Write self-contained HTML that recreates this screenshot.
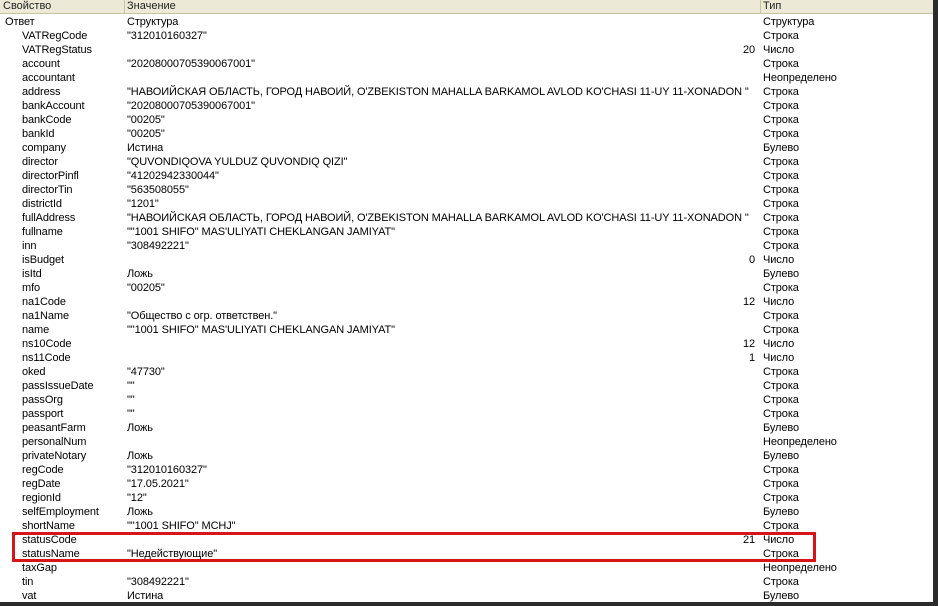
<!DOCTYPE html>
<html><head><meta charset="utf-8"><style>
body{margin:0;width:938px;height:606px;overflow:hidden;background:#fff;font-family:"Liberation Sans",Arial,sans-serif;font-size:11px;color:#000;position:relative}
.hdr{position:absolute;left:0;top:0;width:933px;height:13px;background:#ecead6;border-bottom:1px solid #c9c3a3}
.hdr div{position:absolute;top:0;height:13px;line-height:13px;padding-left:3px;color:#222}
.sep{position:absolute;top:0;width:1px;height:13px;background:#c9c3a3}
.row{position:absolute;left:0;width:933px;height:14px;line-height:14px;white-space:nowrap}
.row span{position:absolute;top:1px;letter-spacing:-0.1px}
.p{left:22px}.p0{left:5px}.v{left:127px}.n{right:178px;text-align:right}.t{left:763px}
.rb{position:absolute;right:0;top:0;width:5px;height:606px;background:#2b2b2b}
.bb{position:absolute;left:0;top:602px;width:938px;height:4px;background:#2b2b2b}
.box{position:absolute;left:12px;top:532px;width:798px;height:24px;border:3px solid #d7141a}
</style></head><body>
<div class="hdr"><div style="left:0">Свойство</div><div style="left:124px">Значение</div><div style="left:760px">Тип</div></div>
<div class="sep" style="left:124px"></div><div class="sep" style="left:760px"></div>
<div class="row" style="top:14px"><span class="p0">Ответ</span><span class="v">Структура</span><span class="t">Структура</span></div>
<div class="row" style="top:28px"><span class="p">VATRegCode</span><span class="v">"312010160327"</span><span class="t">Строка</span></div>
<div class="row" style="top:42px"><span class="p">VATRegStatus</span><span class="n">20</span><span class="t">Число</span></div>
<div class="row" style="top:56px"><span class="p">account</span><span class="v">"20208000705390067001"</span><span class="t">Строка</span></div>
<div class="row" style="top:70px"><span class="p">accountant</span><span class="t">Неопределено</span></div>
<div class="row" style="top:84px"><span class="p">address</span><span class="v">"НАВОИЙСКАЯ ОБЛАСТЬ, ГОРОД НАВОИЙ, O'ZBEKISTON MAHALLA BARKAMOL AVLOD KO'CHASI 11-UY 11-XONADON "</span><span class="t">Строка</span></div>
<div class="row" style="top:98px"><span class="p">bankAccount</span><span class="v">"20208000705390067001"</span><span class="t">Строка</span></div>
<div class="row" style="top:112px"><span class="p">bankCode</span><span class="v">"00205"</span><span class="t">Строка</span></div>
<div class="row" style="top:126px"><span class="p">bankId</span><span class="v">"00205"</span><span class="t">Строка</span></div>
<div class="row" style="top:140px"><span class="p">company</span><span class="v">Истина</span><span class="t">Булево</span></div>
<div class="row" style="top:154px"><span class="p">director</span><span class="v">"QUVONDIQOVA YULDUZ QUVONDIQ QIZI"</span><span class="t">Строка</span></div>
<div class="row" style="top:168px"><span class="p">directorPinfl</span><span class="v">"41202942330044"</span><span class="t">Строка</span></div>
<div class="row" style="top:182px"><span class="p">directorTin</span><span class="v">"563508055"</span><span class="t">Строка</span></div>
<div class="row" style="top:196px"><span class="p">districtId</span><span class="v">"1201"</span><span class="t">Строка</span></div>
<div class="row" style="top:210px"><span class="p">fullAddress</span><span class="v">"НАВОИЙСКАЯ ОБЛАСТЬ, ГОРОД НАВОИЙ, O'ZBEKISTON MAHALLA BARKAMOL AVLOD KO'CHASI 11-UY 11-XONADON "</span><span class="t">Строка</span></div>
<div class="row" style="top:224px"><span class="p">fullname</span><span class="v">""1001 SHIFO" MAS'ULIYATI CHEKLANGAN JAMIYAT"</span><span class="t">Строка</span></div>
<div class="row" style="top:238px"><span class="p">inn</span><span class="v">"308492221"</span><span class="t">Строка</span></div>
<div class="row" style="top:252px"><span class="p">isBudget</span><span class="n">0</span><span class="t">Число</span></div>
<div class="row" style="top:266px"><span class="p">isItd</span><span class="v">Ложь</span><span class="t">Булево</span></div>
<div class="row" style="top:280px"><span class="p">mfo</span><span class="v">"00205"</span><span class="t">Строка</span></div>
<div class="row" style="top:294px"><span class="p">na1Code</span><span class="n">12</span><span class="t">Число</span></div>
<div class="row" style="top:308px"><span class="p">na1Name</span><span class="v">"Общество с огр. ответствен."</span><span class="t">Строка</span></div>
<div class="row" style="top:322px"><span class="p">name</span><span class="v">""1001 SHIFO" MAS'ULIYATI CHEKLANGAN JAMIYAT"</span><span class="t">Строка</span></div>
<div class="row" style="top:336px"><span class="p">ns10Code</span><span class="n">12</span><span class="t">Число</span></div>
<div class="row" style="top:350px"><span class="p">ns11Code</span><span class="n">1</span><span class="t">Число</span></div>
<div class="row" style="top:364px"><span class="p">oked</span><span class="v">"47730"</span><span class="t">Строка</span></div>
<div class="row" style="top:378px"><span class="p">passIssueDate</span><span class="v">""</span><span class="t">Строка</span></div>
<div class="row" style="top:392px"><span class="p">passOrg</span><span class="v">""</span><span class="t">Строка</span></div>
<div class="row" style="top:406px"><span class="p">passport</span><span class="v">""</span><span class="t">Строка</span></div>
<div class="row" style="top:420px"><span class="p">peasantFarm</span><span class="v">Ложь</span><span class="t">Булево</span></div>
<div class="row" style="top:434px"><span class="p">personalNum</span><span class="t">Неопределено</span></div>
<div class="row" style="top:448px"><span class="p">privateNotary</span><span class="v">Ложь</span><span class="t">Булево</span></div>
<div class="row" style="top:462px"><span class="p">regCode</span><span class="v">"312010160327"</span><span class="t">Строка</span></div>
<div class="row" style="top:476px"><span class="p">regDate</span><span class="v">"17.05.2021"</span><span class="t">Строка</span></div>
<div class="row" style="top:490px"><span class="p">regionId</span><span class="v">"12"</span><span class="t">Строка</span></div>
<div class="row" style="top:504px"><span class="p">selfEmployment</span><span class="v">Ложь</span><span class="t">Булево</span></div>
<div class="row" style="top:518px"><span class="p">shortName</span><span class="v">""1001 SHIFO" MCHJ"</span><span class="t">Строка</span></div>
<div class="row" style="top:532px"><span class="p">statusCode</span><span class="n">21</span><span class="t">Число</span></div>
<div class="row" style="top:546px"><span class="p">statusName</span><span class="v">"Недействующие"</span><span class="t">Строка</span></div>
<div class="row" style="top:560px"><span class="p">taxGap</span><span class="t">Неопределено</span></div>
<div class="row" style="top:574px"><span class="p">tin</span><span class="v">"308492221"</span><span class="t">Строка</span></div>
<div class="row" style="top:588px"><span class="p">vat</span><span class="v">Истина</span><span class="t">Булево</span></div>
<div class="box"></div>
<div class="rb"></div><div class="bb"></div>
</body></html>
